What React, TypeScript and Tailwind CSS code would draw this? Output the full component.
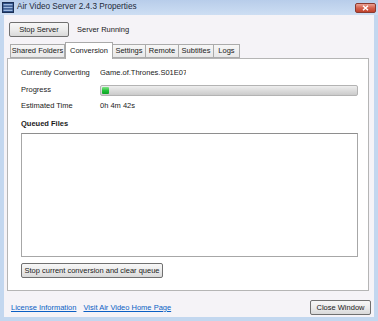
import { FC, ReactNode } from "react";

const TABS = [
  { label: "Shared Folders", width: "w-[55px]" },
  { label: "Conversion", width: "w-[48px]", active: true },
  { label: "Settings", width: "w-[34px]" },
  { label: "Remote", width: "w-[34px]" },
  { label: "Subtitles", width: "w-[36px]" },
  { label: "Logs", width: "w-[27px]" },
];

const Button: FC<{ className?: string; children: ReactNode }> = ({ className, children }) => (
  <div
    className={`flex items-center justify-center rounded-[2px] border border-[#707070] bg-linear-to-b from-[#f7f7f7] via-[#ececec] to-[#d9d9d9] text-[7.5px] leading-none text-[#1a1a1a] ${className ?? ""}`}
  >
    {children}
  </div>
);

const Row: FC<{ label: string; className?: string; children: ReactNode }> = ({ label, className, children }) => (
  <div className={`flex h-[16px] items-center ${className ?? ""}`}>
    <div className="w-[79px] shrink-0">{label}</div>
    {children}
  </div>
);

const AppIcon = () => (
  <svg width="12" height="11" viewBox="0 0 12 11">
    <rect x="0.5" y="0.5" width="11" height="10" fill="#2d4f86" stroke="#1b2f55" />
    <rect x="1.5" y="2" width="9" height="1.4" fill="#9fb9df" />
    <rect x="1.5" y="4.8" width="9" height="1.4" fill="#9fb9df" />
    <rect x="1.5" y="7.6" width="9" height="1.4" fill="#9fb9df" />
  </svg>
);

export default function App() {
  return (
    <div className="flex h-[321px] w-[378px] flex-col bg-[#c3d7ef] font-['Liberation_Sans',Arial,sans-serif] text-[#1a1a1a]">
      {/* title bar */}
      <div className="flex h-[15px] shrink-0 items-center bg-linear-to-b from-[#b8cdea] to-[#cddef3] pl-[2px] pr-[2px]">
        <AppIcon />
        <span className="ml-[3px] text-[8.2px] leading-none text-[#1e2a3a]">Air Video Server 2.4.3 Properties</span>
        <div className="ml-auto flex h-[10px] w-[21px] items-center justify-center rounded-[2px] border border-[#8a3a30] bg-linear-to-b from-[#e9a093] via-[#d4604c] to-[#c0412c]">
          <svg width="7" height="6" viewBox="0 0 7 6">
            <path d="M1 0.8 L6 5.2 M6 0.8 L1 5.2" stroke="#fff" strokeWidth="1.5" />
          </svg>
        </div>
      </div>

      {/* client area */}
      <div className="mx-[4px] mb-[4px] flex flex-1 flex-col bg-[#f5f3f7] text-[7.5px] leading-none">
        <div className="mt-[7px] flex items-center">
          <Button className="ml-[5px] h-[15px] w-[60px]">Stop Server</Button>
          <span className="ml-[8px]">Server Running</span>
        </div>

        {/* tabs */}
        <div className="mt-[5px] ml-[6px] flex h-[16px] items-end">
          {TABS.map((tab) =>
            tab.active ? (
              <div
                key={tab.label}
                className={`${tab.width} relative z-10 -mb-px flex h-[17px] items-center justify-center border border-b-0 border-[#a9a9a9] bg-white`}
              >
                {tab.label}
              </div>
            ) : (
              <div
                key={tab.label}
                className={`${tab.width} -ml-px flex h-[14px] items-center justify-center border border-[#ababab] bg-linear-to-b from-[#f6f6f6] to-[#e8e8e8] first:ml-0`}
              >
                {tab.label}
              </div>
            )
          )}
        </div>

        {/* tab panel */}
        <div className="ml-[3px] mr-[5px] flex h-[233px] flex-col border border-[#b5b5b5] bg-white pl-[13px] pt-[6px]">
          <Row label="Currently Converting">
            <span className="w-[86px] overflow-hidden whitespace-nowrap">Game.of.Thrones.S01E07</span>
          </Row>
          <Row label="Progress" className="mt-px">
            <div className="flex h-[11px] w-[258px] items-stretch rounded-[2px] border border-[#b3b3b3] bg-linear-to-b from-[#eeeeee] via-[#dcdcdc] to-[#cbcbcb] p-px">
              <div className="w-[7px] rounded-[1px] bg-linear-to-b from-[#7ee487] via-[#22c23a] to-[#0aa323]" />
            </div>
          </Row>
          <Row label="Estimated Time">
            <span>0h 4m 42s</span>
          </Row>
          <div className="mt-[2px] flex h-[16px] items-center font-bold">Queued Files</div>
          <div className="mt-px h-[124px] w-[337px] border border-[#a7a7a7] border-t-[#8e8e8e] bg-white" />
          <Button className="mt-[6px] h-[15px] w-[142px]">Stop current conversion and clear queue</Button>
        </div>

        {/* footer */}
        <div className="mt-[9px] flex items-center pl-[7px] pr-[3px]">
          <span className="text-[#0b5fc4] underline">License Information</span>
          <span className="ml-[7px] text-[#0b5fc4] underline">Visit Air Video Home Page</span>
          <Button className="ml-auto h-[15px] w-[61px]">Close Window</Button>
        </div>
      </div>
    </div>
  );
}
